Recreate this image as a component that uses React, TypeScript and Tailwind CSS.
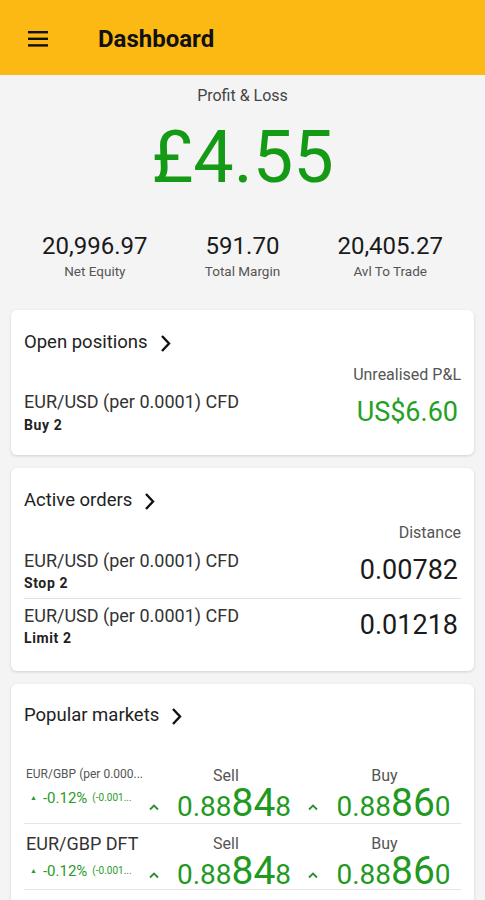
const orders = [
  { name: 'EUR/USD (per 0.0001) CFD', side: 'Stop 2', distance: '0.00782' },
  { name: 'EUR/USD (per 0.0001) CFD', side: 'Limit 2', distance: '0.01218' },
]

const markets = [
  { name: 'EUR/GBP (per 0.000...', small: true, sell: ['0.88', '84', '8'], buy: ['0.88', '86', '0'] },
  { name: 'EUR/GBP DFT', small: false, sell: ['0.88', '84', '8'], buy: ['0.88', '86', '0'] },
]

function Caret() {
  return (
    <svg width="12" height="8" viewBox="0 0 12 8" className="mt-[8px]">
      <polyline points="2,6.5 6,2.5 10,6.5" fill="none" stroke="#2c8f2c" strokeWidth="1.8" />
    </svg>
  )
}

function Price({ parts }: { parts: string[] }) {
  return (
    <div className="flex h-[30px] items-baseline justify-center leading-[30px] text-[#1f9a1f]">
      <span className="text-[28px]">{parts[0]}</span>
      <span className="text-[39px]">{parts[1]}</span>
      <span className="text-[28px]">{parts[2]}</span>
    </div>
  )
}

function CardTitle({ title }: { title: string }) {
  return (
    <div className="flex h-6 items-center gap-[12px] text-[18.5px] text-[#222]">
      <span>{title}</span>
      <svg width="11" height="19" viewBox="0 0 11 19">
        <polyline points="2,2 9,9.5 2,17" fill="none" stroke="#111" strokeWidth="2.4" />
      </svg>
    </div>
  )
}

export default function App() {
  return (
    <div className="min-h-screen bg-[#f4f4f4] font-['Roboto',sans-serif]">
      {/* Toolbar */}
      <div className="flex h-[75px] items-center bg-[#fdb913]">
        <svg width="20" height="18" viewBox="0 0 20 18" className="ml-[28px]">
          <rect x="0" y="2" width="20" height="2.4" fill="#111" />
          <rect x="0" y="8.6" width="20" height="2.4" fill="#111" />
          <rect x="0" y="15.2" width="20" height="2.4" fill="#111" />
        </svg>
        <h1 className="ml-[50px] mt-[3px] text-[24px] font-bold text-[#111]">Dashboard</h1>
      </div>

      {/* Profit & Loss */}
      <div className="pt-[11px] text-center">
        <div className="text-[16px] leading-5 text-[#444]">Profit &amp; Loss</div>
        <div className="mt-[16px] text-[72px] leading-none text-[#159a15]">£4.55</div>
      </div>

      <div className="mt-[38px] grid grid-cols-3 px-[21px] text-center">
        {[
          ['20,996.97', 'Net Equity'],
          ['591.70', 'Total Margin'],
          ['20,405.27', 'Avl To Trade'],
        ].map(([value, label]) => (
          <div key={label}>
            <div className="text-[24px] leading-7 text-[#1a1a1a]">{value}</div>
            <div className="mt-[3px] text-[13.5px] leading-4 text-[#555]">{label}</div>
          </div>
        ))}
      </div>

      <div className="mx-[11px] mt-[31px] flex flex-col gap-[13px] pb-6">
        {/* Open positions */}
        <div className="rounded-md bg-white px-[13px] pb-[21px] pt-[21px] shadow-[0_1px_3px_rgba(0,0,0,0.15)]">
          <CardTitle title="Open positions" />
          <div className="mt-[10px] text-right text-[16px] leading-5 text-[#555]">Unrealised P&amp;L</div>
          <div className="mt-[5px] flex items-center justify-between">
            <div>
              <div className="text-[18px] leading-6 text-[#333]">EUR/USD (per 0.0001) CFD</div>
              <div className="mt-[2px] text-[14px] font-bold leading-[18px] tracking-[0.6px] text-[#222]">Buy 2</div>
            </div>
            <div className="pr-[3px] text-[27px] text-[#24a024]">US$6.60</div>
          </div>
        </div>

        {/* Active orders */}
        <div className="rounded-md bg-white px-[13px] pb-[24px] pt-[21px] shadow-[0_1px_3px_rgba(0,0,0,0.15)]">
          <CardTitle title="Active orders" />
          <div className="mt-[10px] text-right text-[16px] leading-5 text-[#555]">Distance</div>
          {orders.map((o, i) => (
            <div
              key={o.side}
              className={`flex items-center justify-between ${i === 0 ? 'mt-[6px] border-b border-[#e2e2e2] pb-[6px]' : 'pt-[5px]'}`}
            >
              <div>
                <div className="text-[18px] leading-6 text-[#333]">{o.name}</div>
                <div className="mt-[1px] text-[14px] font-bold leading-[18px] tracking-[0.6px] text-[#222]">{o.side}</div>
              </div>
              <div className="pr-[3px] text-[27px] text-[#1a1a1a]">{o.distance}</div>
            </div>
          ))}
        </div>

        {/* Popular markets */}
        <div className="rounded-md bg-white px-[13px] pb-[20px] pt-[20px] shadow-[0_1px_3px_rgba(0,0,0,0.15)]">
          <CardTitle title="Popular markets" />
          <div className="mt-[38px]">
            {markets.map((m, i) => (
              <div key={m.name} className={`flex border-b border-[#e6e6e6] ${i === 0 ? 'pb-[5px]' : 'pb-[3px] pt-[10px]'}`}>
                <div className="flex w-[124px] flex-col pl-[2px]">
                  {m.small ? (
                    <div className="mt-[1px] text-[12px] leading-[14px] text-[#555]">{m.name}</div>
                  ) : (
                    <div className="-mt-[1px] text-[18px] leading-[22px] text-[#333]">{m.name}</div>
                  )}
                  <div className={`flex h-[18px] items-center whitespace-nowrap leading-[18px] text-[#2b9a2b] ${i === 0 ? 'mt-[8px]' : 'mt-[7px]'}`}>
                    <span className="ml-[4px] text-[7px]">▲</span>
                    <span className="ml-[6px] text-[15px]">-0.12%</span>
                    <span className="ml-[5px] text-[10px]">(-0.001...</span>
                  </div>
                </div>
                <div className="flex-1">
                  <div className="grid grid-cols-[20px_132px_26px_1fr] text-[16px] leading-5 text-[#555]">
                    <span />
                    <span className="pr-[16px] text-center">Sell</span>
                    <span />
                    <span className="pr-[18px] text-center">Buy</span>
                  </div>
                  <div className="mt-[2px] grid grid-cols-[20px_132px_26px_1fr] items-center">
                    <Caret />
                    <Price parts={m.sell} />
                    <div className="flex justify-center">
                      <Caret />
                    </div>
                    <Price parts={m.buy} />
                  </div>
                </div>
              </div>
            ))}
          </div>
        </div>
      </div>
    </div>
  )
}
